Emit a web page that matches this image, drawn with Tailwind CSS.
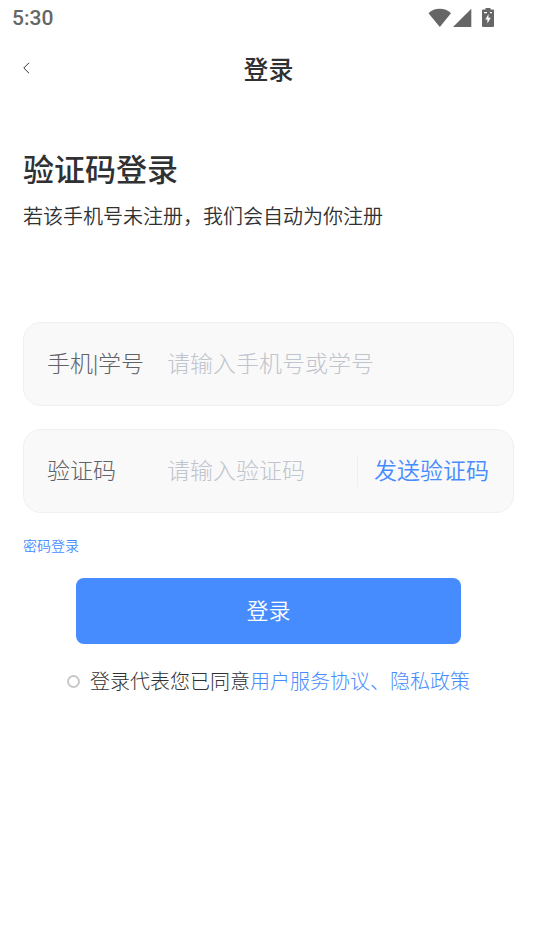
<!DOCTYPE html>
<html lang="zh-CN">
<head>
<meta charset="utf-8">
<meta name="viewport" content="width=device-width, initial-scale=1">
<title>登录</title>
<script src="https://cdn.jsdelivr.net/npm/@tailwindcss/browser@4"></script>
</head>
<body class="min-h-screen bg-white font-['Noto_Sans_CJK_SC',sans-serif] text-[#303133]">
<div class="flex h-9 items-center justify-between pr-[41px] pl-3 text-[#666666]">
  <span class="pt-[2px] font-[Roboto,sans-serif] text-[21px] font-medium">5:30</span>
  <div class="flex items-center gap-[2px]">
    <svg class="h-[20px] w-[23px]" viewBox="0 0 23 20" fill="currentColor" aria-hidden="true"><path d="M.5 5.200C3.500 2.300 7.500.8 11.800.8S20 2.300 23 5.200L11.800 19Z"/></svg>
    <svg class="h-[20px] w-[19px]" viewBox="0 0 19 20" fill="currentColor" aria-hidden="true"><path d="M18.300 .8V19H0Z"/></svg>
    <svg class="ml-[8px] h-[20px] w-3" viewBox="0 0 12 20" fill="currentColor" aria-hidden="true"><path fill-rule="evenodd" d="M3.500 0h5v1.500H11q1 0 1 1V18q0 1-1 1H1q-1 0-1-1V2.500q0-1 1-1h2.500ZM2 4v1.300h3V4ZM8 4v1.300h2V4ZM6.500 6 3.300 11.500H5.400V15.500L8.800 9.800H6.500Z"/></svg>
  </div>
</div>
<header class="grid h-16 grid-cols-[1fr_auto_1fr] items-center pr-[21px] pl-[23px]">
  <button type="button" aria-label="返回" class="flex h-8 w-8 items-center">
    <svg class="h-3 w-2" viewBox="0 0 8 12" fill="none" stroke="#303133" stroke-width="1" aria-hidden="true"><path d="M6 .8.800 6 6 11.200"/></svg>
  </button>
  <h1 class="pt-[2px] text-[25px] font-medium">登录</h1>
</header>
<main class="pt-12 pr-[21px] pl-[23px]">
  <h2 class="text-[31px] leading-10 font-medium">验证码登录</h2>
  <p class="mt-3 text-xl leading-8 font-[350]">若该手机号未注册，我们会自动为你注册</p>
  <form class="mt-[90px]">
    <div class="flex h-[84px] items-center rounded-[18px] border border-[#f0f0f0] bg-[#f9f9f9] pr-6 pb-1 pl-[23px] text-[23px] font-light">
      <label for="account" class="w-[120px] shrink-0 text-[#606266]">手机<span class="font-[Roboto,sans-serif] leading-none">|</span>学号</label>
      <input id="account" type="text" placeholder="请输入手机号或学号" class="min-w-0 flex-1 bg-transparent outline-none placeholder:text-[#c0c4cc]">
    </div>
    <div class="mt-[23px] flex h-[84px] items-center rounded-[18px] border border-[#f0f0f0] bg-[#f9f9f9] pr-6 pl-[23px] text-[23px] font-light">
      <label for="code" class="w-[120px] shrink-0 pb-1 text-[#606266]">验证码</label>
      <input id="code" type="text" placeholder="请输入验证码" class="min-w-0 flex-1 bg-transparent pb-1 outline-none placeholder:text-[#c0c4cc]">
      <button type="button" class="h-8 shrink-0 border-l border-[#f0f0f0] pb-1 pl-4 leading-7 font-[350] text-[#478cff]">发送验证码</button>
    </div>
    <a href="#password" class="mt-[22px] block w-fit text-sm leading-5 font-[350] text-[#478cff]">密码登录</a>
    <button type="submit" class="mx-[53px] mt-[23px] block h-[66px] w-[calc(100%-106px)] rounded-lg bg-[#478cff] pb-1 text-[22px] font-[350] text-white">登录</button>
    <div class="mt-[21px] flex items-center justify-center gap-[10px] text-xl leading-8 font-light">
      <input id="agree" type="radio" class="h-[13px] w-[13px] shrink-0 appearance-none rounded-full border-2 border-[#c8c8c8] checked:bg-[#478cff]">
      <p><label for="agree">登录代表您已同意</label><a href="#terms" class="text-[#478cff]">用户服务协议、</a><a href="#privacy" class="text-[#478cff]">隐私政策</a></p>
    </div>
  </form>
</main>
</body>
</html>
